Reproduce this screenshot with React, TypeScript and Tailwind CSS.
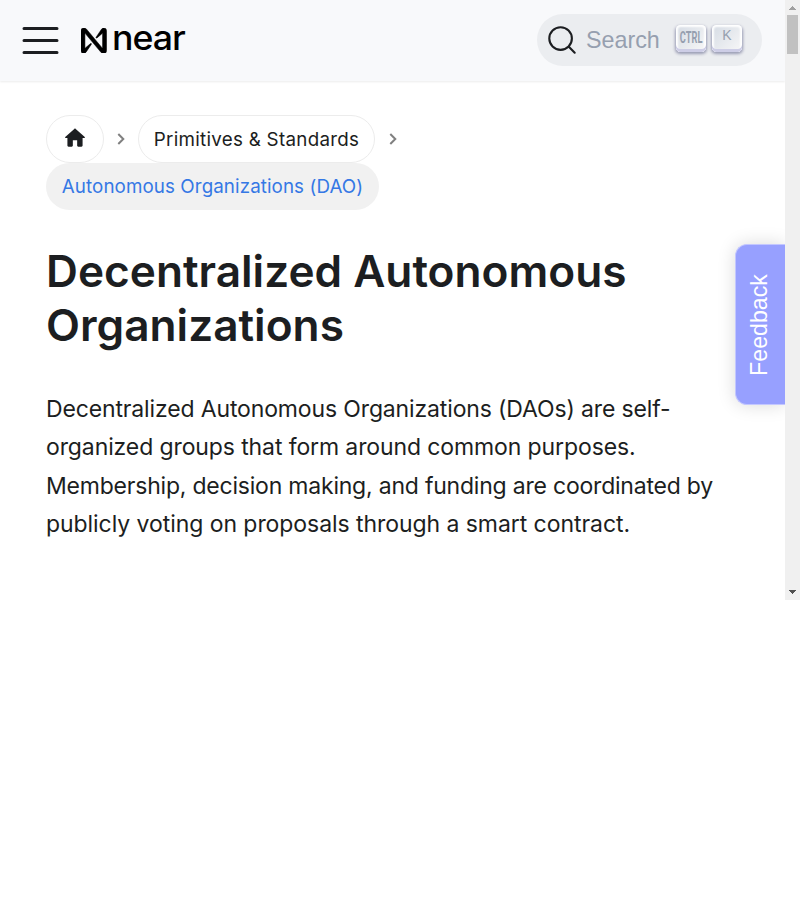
import React from "react";

function MenuIcon() {
  return (
    <svg className="ml-[18px] size-[45px] shrink-0" viewBox="0 0 30 30" fill="none" stroke="#1c1e21" strokeWidth="2" strokeLinecap="round">
      <path d="M4 7h22M4 15h22M4 23h22" />
    </svg>
  );
}

function Logo() {
  return (
    <div className="ml-[18px] flex h-[30px] items-center">
      <svg className="size-[25.500px] shrink-0" viewBox="0 0 24 24" fill="#000" stroke="#000" strokeWidth="0.5">
        <path d="M21.443 0c-.89 0-1.714.46-2.18 1.218l-5.017 7.448a.533.533 0 0 0 .792.7l4.938-4.282a.2.2 0 0 1 .334.151v13.410a.2.2 0 0 1-.355.128L5.030.905A2.555 2.555 0 0 0 3.078 0h-.521A2.557 2.557 0 0 0 0 2.557v18.886a2.557 2.557 0 0 0 4.736 1.338l5.017-7.448a.532.532 0 0 0-.792-.7l-4.938 4.283a.2.2 0 0 1-.333-.152V5.352a.2.2 0 0 1 .354-.128l14.924 17.870c.486.574 1.200.905 1.952.906h.521A2.558 2.558 0 0 0 24 21.445V2.557A2.558 2.558 0 0 0 21.443 0Z" />
      </svg>
      <span className="mb-[5px] ml-[5px] inline-block origin-left scale-x-[1.05] text-[34px] leading-[30px] font-medium tracking-[-1px] text-black">near</span>
    </div>
  );
}

const keyClass =
  "flex h-[27px] w-[30px] justify-center rounded-[4.5px] bg-[linear-gradient(-225deg,#d5dbe4,#f8f8f8)] pb-[3px] text-[#969faf] shadow-[inset_0_-3px_0_0_#cdcde6,inset_0_0_2px_2px_#fff,0_1.5px_3px_0.5px_rgba(30,35,90,0.4)]";

function Search() {
  return (
    <button className="mr-[23px] mb-[2px] flex h-[52px] w-[225px] items-center rounded-full bg-[#ebedf0] pl-[10px] font-['Liberation_Sans',sans-serif]">
      <svg className="size-[30px]" viewBox="0 0 20 20" fill="none" stroke="#1c1e21" strokeWidth="1.4" strokeLinecap="round" strokeLinejoin="round">
        <path d="M14.386 14.386l4.0877 4.0877-4.0877-4.0877c-2.9418 2.9419-7.7115 2.9419-10.6533 0-2.9419-2.9418-2.9419-7.7115 0-10.6533 2.9418-2.9419 7.7115-2.9419 10.6533 0 2.9419 2.9418 2.9419 7.7115 0 10.6533z" />
      </svg>
      <span className="ml-[9px] w-[90px] text-left text-[24px] leading-[28px] text-[#969faf]"><span className="inline-block origin-left scale-x-[0.97]">Search</span></span>
      <span className="-mt-[2px] flex gap-[6px]">
        <kbd className={keyClass}>
          <span className="flex scale-x-[0.56] items-center pt-[1px] font-['Roboto',sans-serif] text-[16.500px] leading-[24px] font-bold">CTRL</span>
        </kbd>
        <kbd className={keyClass}>
          <span className="font-['Liberation_Sans',sans-serif] text-[14px] leading-[20px]">K</span>
        </kbd>
      </span>
    </button>
  );
}

function Chevron() {
  return (
    <svg className="mx-[12px] mt-[1px] h-[12px] w-[10px]" viewBox="0 0 10 12" fill="none" stroke="#808080" strokeWidth="2">
      <path d="M2.300 1l5 5-5 5" />
    </svg>
  );
}

function Breadcrumbs() {
  return (
    <nav className="text-[18.800px] leading-[30px]">
      <div className="flex h-[47.500px] items-center">
        <a className="flex h-[47.500px] w-[58px] justify-center rounded-full border border-[#ececec] pt-[9px]">
          <svg className="size-[26px]" viewBox="0 0 24 24" fill="#1c1e21">
            <path d="M10 19v-5h4v5c0 .55.45 1 1 1h3c.55 0 1-.45 1-1v-7h1.700c.46 0 .68-.57.33-.87L12.670 3.600c-.38-.34-.96-.34-1.340 0l-8.360 7.530c-.34.3-.13.87.33.87H5v7c0 .55.45 1 1 1h3c.55 0 1-.45 1-1z" />
          </svg>
        </a>
        <Chevron />
        <a className="mr-[1px] flex h-[47.500px] w-[237px] items-center justify-center rounded-full border border-[#ececec] pt-[2px] tracking-[0.27px] whitespace-nowrap text-[#1c1e21]">Primitives &amp; Standards</a>
        <Chevron />
      </div>
      <a className="flex h-[47.500px] w-[333px] items-center justify-center rounded-full bg-[#f1f1f1] pt-[2px] tracking-[0.08px] whitespace-nowrap text-[#3578e5]">Autonomous Organizations (DAO)</a>
    </nav>
  );
}

function Scrollbar() {
  return (
    <div className="flex h-[600px] w-[15px] shrink-0 flex-col items-center bg-[#f0f0f0]">
      <svg className="h-[15px] w-[15px] shrink-0" viewBox="0 0 15 15" shapeRendering="crispEdges" fill="#a0a0a0"><path d="M4 10L7.500 6L11 10z" /></svg>
      <div className="h-[39px] w-[11px] bg-[#c1c1c1]" />
      <svg className="mt-auto h-[15px] w-[15px] shrink-0" viewBox="0 0 15 15" shapeRendering="crispEdges" fill="#505050"><path d="M4 5L7.500 9L11 5z" /></svg>
    </div>
  );
}

export default function App() {
  return (
    <div className="h-[900px] w-[800px] overflow-hidden bg-white font-['Inter',sans-serif] text-[#1c1e21]">
      <div className="flex h-[600px]">
        <div className="relative w-[785px] shrink-0 overflow-hidden">
          <header className="flex h-[81px] items-center bg-[#f8f9fb] shadow-[0_1px_2px_0_rgba(0,0,0,0.08)]">
            <MenuIcon />
            <Logo />
            <div className="ml-auto"><Search /></div>
          </header>
          <main className="px-[46px] pt-[34px]">
            <Breadcrumbs />
            <h1 className="mt-[34px] text-[44.200px] leading-[54px] font-semibold">Decentralized Autonomous<br />Organizations</h1>
            <p className="mt-[38px] text-[23px] leading-[38.400px] whitespace-nowrap">
              <span className="block tracking-[-0.14px]">Decentralized Autonomous Organizations (DAOs) are self-</span>
              <span className="block tracking-[-0.11px]">organized groups that form around common purposes.</span>
              <span className="block tracking-[-0.21px]">Membership, decision making, and funding are coordinated by</span>
              <span className="block tracking-[-0.06px]">publicly voting on proposals through a smart contract.</span>
            </p>
          </main>
          <button className="absolute top-[244px] right-0 flex h-[161px] w-[50px] items-center justify-center rounded-l-[12px] border border-r-0 border-[#c3c7ff] bg-[#97a0ff] pr-[3px] shadow-[0_0_18px_rgba(0,0,0,0.15)]">
            <span className="-rotate-90 font-['Liberation_Sans',sans-serif] text-[23.200px] leading-[28px] text-white">Feedback</span>
          </button>
        </div>
        <Scrollbar />
      </div>
    </div>
  );
}
